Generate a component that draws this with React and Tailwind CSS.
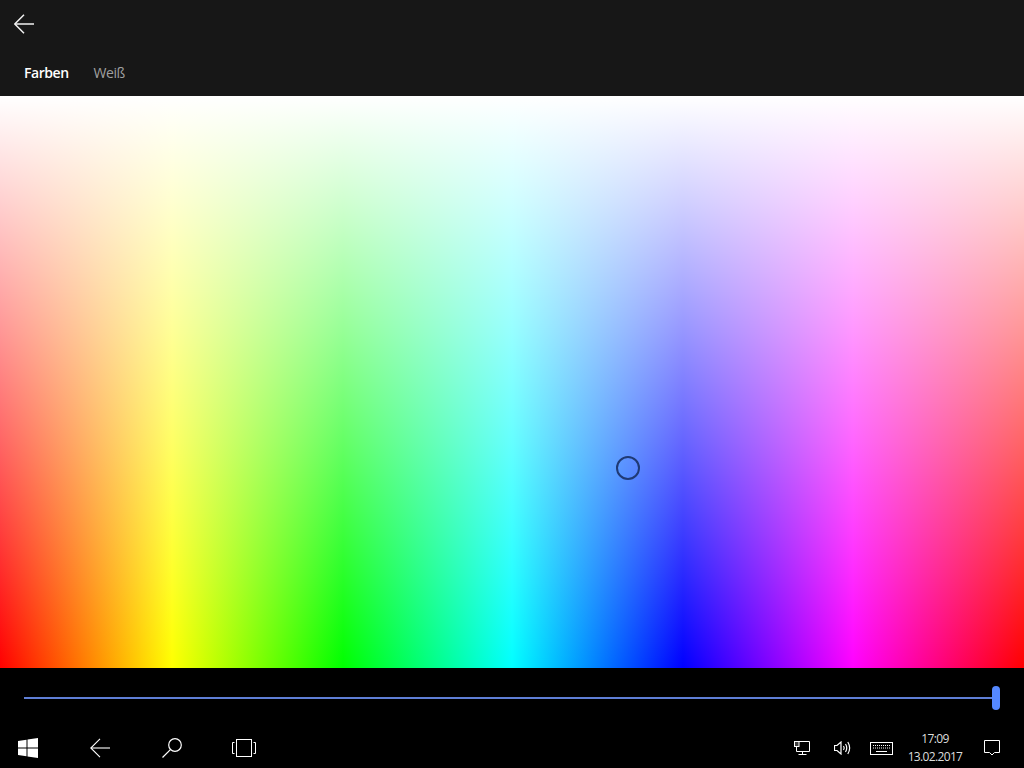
import React from "react";

const WinLogo = () => (
  <svg width="20" height="20" viewBox="0 0 20 20" fill="#fff">
    <path d="M0 3 L8.5 1.8 V9.4 H0 Z" />
    <path d="M9.5 1.6 L20 0 V9.4 H9.5 Z" />
    <path d="M0 10.5 H8.5 V18.2 L0 17 Z" />
    <path d="M9.5 10.5 H20 V20 L9.5 18.4 Z" />
  </svg>
);

const BackArrow = ({ width = 1.1 }) => (
  <svg width="20" height="20" viewBox="0 0 20 20" fill="none" stroke="currentColor" strokeWidth={width}>
    <path d="M20 10 H1" />
    <path d="M10 .8 L.8 10 L10 19.2" />
  </svg>
);

const SearchIcon = () => (
  <svg width="20" height="20" viewBox="0 0 20 20" fill="none" stroke="#fff" strokeWidth="1.2">
    <circle cx="13" cy="7" r="6.3" />
    <path d="M8.4 11.6 L.5 19.5" />
  </svg>
);

const TaskViewIcon = () => (
  <svg width="24" height="18" viewBox="0 0 24 18" fill="none" stroke="#fff" strokeWidth="1">
    <rect x="4.5" y=".5" width="15" height="17" />
    <path d="M2.5 3.5 H.5 V14.5 H2.5" />
    <path d="M21.5 3.5 H23.5 V14.5 H21.5" />
  </svg>
);

const NetworkIcon = () => (
  <svg width="16" height="14" viewBox="0 0 16 14" fill="none" stroke="#fff" strokeWidth="1">
    <path d="M5 .5 H15.5 V10.5 H2.5 V6" />
    <rect x=".5" y=".5" width="4.5" height="5" fill="#fff" fillOpacity=".25" />
    <path d="M8.5 10.5 V13.5 M4.5 13.5 H12.5" />
  </svg>
);

const VolumeIcon = () => (
  <svg width="17" height="14" viewBox="0 0 17 14" fill="none" stroke="#fff" strokeWidth="1.2">
    <path d="M.5 4.5 H3 L7 1 V13 L3 9.5 H.5 Z" />
    <path d="M9.5 5 Q11 7 9.5 9" />
    <path d="M11.5 3 Q14 7 11.5 11" />
    <path d="M13.8 1 Q17.5 7 13.8 13" />
  </svg>
);

const KeyboardIcon = () => (
  <svg width="23" height="13" viewBox="0 0 23 13" fill="none" stroke="#fff" strokeWidth="1">
    <rect x=".5" y=".5" width="22" height="12" />
    <path d="M3 3.5 H20 M3 6 H20" strokeDasharray="1 1" />
    <path d="M6 9.5 H17" />
  </svg>
);

const ActionCenterIcon = () => (
  <svg width="16" height="16" viewBox="0 0 16 16" fill="none" stroke="#fff" strokeWidth="1">
    <path d="M.5 .5 H15.5 V12.5 H10.5 L8 15 L5.5 12.5 H.5 Z" />
  </svg>
);

export default function App() {
  return (
    <div className="w-[1024px] h-[768px] flex flex-col overflow-hidden bg-black text-white font-['Open_Sans','Liberation_Sans',sans-serif]">
      {/* header */}
      <div className="h-24 bg-[#171717] flex flex-col shrink-0">
        <div className="h-12 pl-[14px] flex items-center text-[#f2f2f2]">
          <BackArrow width={1.5} />
        </div>
        <div className="h-12 pl-6 pt-[1px] flex items-center gap-[25px] text-[14px]">
          <span className="font-semibold tracking-[-0.45px]">Farben</span>
          <span className="text-[#a0a0a0] tracking-[-0.45px]">Weiß</span>
        </div>
      </div>

      {/* colour field */}
      <div className="relative flex-1 bg-[linear-gradient(to_bottom,#fff,rgba(255,255,255,0)),linear-gradient(to_right,#f00_0%,#ff0_16.8%,#0f0_33.5%,#0ff_50%,#00f_66.7%,#f0f_83.3%,#f00_100%)]">
        <div className="absolute left-[616px] top-[360px] w-6 h-6 rounded-full border-2 border-[#1f3a75]" />
      </div>

      {/* brightness slider */}
      <div className="h-[60px] shrink-0 pl-6 pr-6 flex items-center">
        <div className="flex-1 h-0.5 bg-[#5f7fd6]" />
        <div className="w-2 h-6 rounded-full bg-[#5588ff]" />
      </div>

      {/* taskbar */}
      <div className="h-10 shrink-0 flex items-center">
        <div className="w-[18px]" />
        <WinLogo />
        <div className="ml-[52px] text-white"><BackArrow /></div>
        <div className="ml-[52px]"><SearchIcon /></div>
        <div className="ml-[50px]"><TaskViewIcon /></div>
        <div className="flex-1" />
        <NetworkIcon />
        <div className="ml-[24px]"><VolumeIcon /></div>
        <div className="ml-[19px]"><KeyboardIcon /></div>
        <div className="w-[70px] ml-[7px] flex flex-col items-center text-[12px] leading-[18px] text-[#ddd] tracking-[-0.65px]">
          <span>17:09</span>
          <span>13.02.2017</span>
        </div>
        <div className="ml-[14px] mr-[24px]"><ActionCenterIcon /></div>
      </div>
    </div>
  );
}
